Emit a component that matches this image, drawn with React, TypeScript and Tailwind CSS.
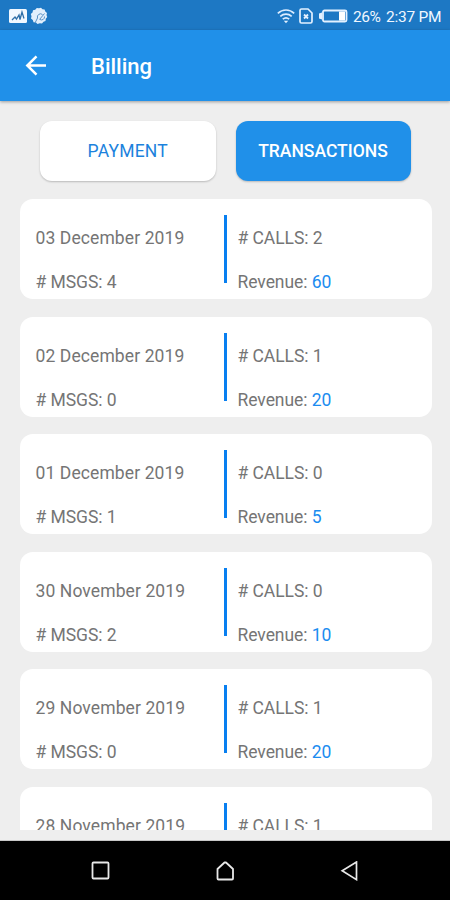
import React from 'react';

type Transaction = {
    date: string;
    msgs: number;
    calls: number;
    revenue: number;
};

const transactions: Transaction[] = [
    { date: '03 December 2019', msgs: 4, calls: 2, revenue: 60 },
    { date: '02 December 2019', msgs: 0, calls: 1, revenue: 20 },
    { date: '01 December 2019', msgs: 1, calls: 0, revenue: 5 },
    { date: '30 November 2019', msgs: 2, calls: 0, revenue: 10 },
    { date: '29 November 2019', msgs: 0, calls: 1, revenue: 20 },
    { date: '28 November 2019', msgs: 0, calls: 1, revenue: 20 },
];

const StatusBar = () => (
    <div className="flex h-[30px] shrink-0 items-center justify-between bg-[#1d78c4] pl-[9px] pr-[10px] pt-[1px] text-[#f0f7ff]">
        <div className="flex items-center gap-[3px]">
            <svg width="18" height="14" viewBox="0 0 18 14">
                <rect width="18" height="14" rx="1.500" fill="#f2f8ff" />
                <path d="M3 11 6 8l1.500 2L10 6l1 4.500L13 3l2 6.500" fill="none" stroke="#2f6fa8" strokeWidth="1.300" />
            </svg>
            <svg width="18" height="18" viewBox="0 0 18 18">
                <path d="M9 1.200 11 .8 12.500 2.200 14.600 2.500 15.300 4.500 17 6 16.500 8 17.200 10 15.800 11.800 15.500 14 13.500 14.800 12 16.500 9.800 16.200 7.500 17 6 15.500 3.500 15.200 2.800 13 1 11.500 1.500 9.300.8 7 2.500 5.500 3 3.200 5.200 2.700 6.800 1Z" fill="#e2effc" />
                <path d="m5 16 2.500-5M9.500 12.500l5-6M7.500 11a3.200 3.200 0 0 1 5-3.500M10 12.500a3 3 0 0 0 4.500-3" fill="none" stroke="#5b92c6" />
            </svg>
        </div>
        <div className="flex items-center">
            <svg width="18" height="16" viewBox="0 0 18 16" fill="none" stroke="#dcecff" strokeWidth="1.700">
                <path d="M.8 5.300C5.500.9 12.500.9 17.200 5.300M3.300 8.300c3.300-3 8.100-3 11.400 0M5.800 11.200c1.900-1.700 4.500-1.700 6.400 0" />
                <path d="M6.800 12.700 9 15.200l2.200-2.500Z" fill="#e4f1ff" stroke="none" />
            </svg>
            <svg className="ml-[4px]" width="14" height="16" viewBox="0 0 14 16">
                <path d="M2.500 1H9l4 4v8.500a1.500 1.500 0 0 1-1.500 1.500h-9A1.500 1.500 0 0 1 1 13.500v-11A1.500 1.500 0 0 1 2.500 1Z" fill="none" stroke="#e4f1ff" strokeWidth="1.700" />
                <path d="m5 6.500 4 4m0-4-4 4" stroke="#e4f1ff" strokeWidth="1.800" />
            </svg>
            <svg className="ml-[5px]" width="30" height="14" viewBox="0 0 30 14">
                <rect x="5" y="1.500" width="23.500" height="11" rx="1.500" fill="none" stroke="#e4f1ff" strokeWidth="1.800" />
                <path d="M4 3.500 1 4.500v5l3 1Z" fill="#e4f1ff" />
                <rect x="21" y="2.500" width="6" height="9" fill="#fff" />
            </svg>
            <span className="ml-[5px] w-[27px] whitespace-nowrap pt-[2px] text-[15.500px] leading-[20px] tracking-[-0.500px]">26%</span>
            <span className="ml-[6px] w-[54px] whitespace-nowrap pt-[2px] text-[15.500px] leading-[20px] tracking-[-0.250px]">2:37 PM</span>
        </div>
    </div>
);

const Header = () => (
    <header className="z-10 flex h-[70.500px] shrink-0 items-center bg-[#2090e9] pt-[2px] text-white shadow-[0_1px_3px_rgba(0,0,0,0.35)]">
        <button className="ml-[25px] flex size-[22px] items-center justify-center" aria-label="Back">
            <svg width="22" height="22" viewBox="0 0 22 22" fill="none" stroke="#fff" strokeWidth="2.500">
                <path d="M21 10.500H3M11.500 1.300 2.300 10.500l9.200 9.200" />
            </svg>
        </button>
        <h1 className="ml-[44px] pt-[2px] text-[22px] font-medium leading-none">Billing</h1>
    </header>
);

const Tabs = () => (
    <div className="flex h-[60.500px] shrink-0 gap-[20px] pl-[40px] text-[17.500px] font-medium">
        <button className="h-[60px] w-[175.500px] rounded-[12px] bg-white pt-[1px] font-normal tracking-[0.200px] text-[#1c82dd] shadow-[0_1px_2px_rgba(0,0,0,0.22)]">
            PAYMENT
        </button>
        <button className="h-[60px] w-[175px] rounded-[12px] bg-[#2090e9] pt-[1px] text-white shadow-[0_1px_2px_rgba(0,0,0,0.22)]">
            TRANSACTIONS
        </button>
    </div>
);

const TransactionCard = ({ date, msgs, calls, revenue }: Transaction) => (
    <li className="flex h-[100px] shrink-0 rounded-[13px] bg-white pl-[16px] pt-[16px]">
        <div className="flex w-[188px] flex-col gap-[20px] pt-[11px]">
            <p className="leading-[24px] tracking-[0.100px]">{date}</p>
            <p className="leading-[24px] tracking-[-0.060px]"># MSGS: {msgs}</p>
        </div>
        <div className="h-[68px] w-[3.500px] bg-[#087ff0]" />
        <div className="ml-[10.500px] flex flex-col gap-[20px] pt-[11px] tracking-[-0.060px]">
            <p className="leading-[24px]"># CALLS: {calls}</p>
            <p className="leading-[24px]">
                Revenue: <span className="text-[#1b8cf0]">{revenue}</span>
            </p>
        </div>
    </li>
);

const NavBar = () => (
    <nav className="flex h-[60px] shrink-0 items-center justify-between border-t border-[#c8c8c8] bg-black pl-[91px] pr-[91px]">
        <svg width="19" height="20" viewBox="0 0 19 20" fill="none" stroke="#e8e8e8" strokeWidth="1.800">
            <rect x="1.500" y="1.500" width="16" height="16" rx="1" />
        </svg>
        <svg width="20" height="20" viewBox="0 0 20 20" fill="none" stroke="#e8e8e8" strokeWidth="1.800" strokeLinejoin="round">
            <path d="M2.500 8 9.500 1.500h1.500L18 8v9.500a1 1 0 0 1-1 1H3.500a1 1 0 0 1-1-1Z" />
        </svg>
        <svg width="19" height="20" viewBox="0 0 19 20" fill="none" stroke="#e8e8e8" strokeWidth="1.700">
            <path d="M16.500 1v17.600L2.200 9.800Z" />
        </svg>
    </nav>
);

const App = () => {
    return (
        <div className="flex h-[900px] w-[450px] flex-col overflow-hidden bg-[#eeeeee] font-['Roboto',sans-serif]">
            <StatusBar />
            <Header />
            <main className="flex h-[739.500px] shrink-0 flex-col pb-[10px] pt-[20.500px]">
                <Tabs />
                <ul className="mt-[17.500px] flex min-h-0 flex-1 flex-col gap-[17.500px] overflow-hidden pl-[19.500px] pr-[18.500px] text-[17.500px] text-[#757575]">
                    {transactions.map((t) => (
                        <TransactionCard key={t.date} {...t} />
                    ))}
                </ul>
            </main>
            <NavBar />
        </div>
    );
};

export default App;
